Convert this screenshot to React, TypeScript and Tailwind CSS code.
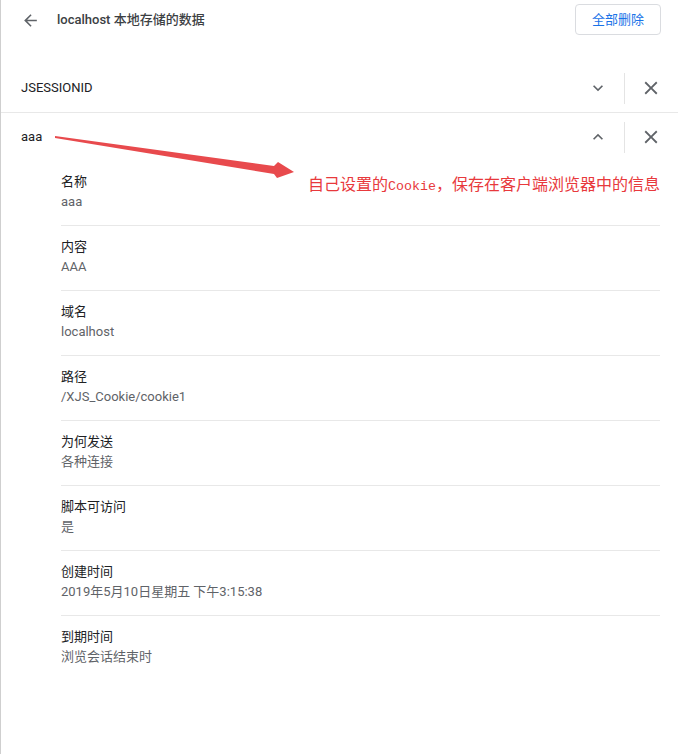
import type { ReactNode } from "react";

const details: { label: string; value: string }[] = [
  { label: "名称", value: "aaa" },
  { label: "内容", value: "AAA" },
  { label: "域名", value: "localhost" },
  { label: "路径", value: "/XJS_Cookie/cookie1" },
  { label: "为何发送", value: "各种连接" },
  { label: "脚本可访问", value: "是" },
  { label: "创建时间", value: "2019年5月10日星期五 下午3:15:38" },
  { label: "到期时间", value: "浏览会话结束时" },
];

function IconButton({ children }: { children: ReactNode }) {
  return (
    <button type="button" className="grid h-10 w-10 place-items-center text-[#5f6368]">
      {children}
    </button>
  );
}

function Chevron({ up }: { up?: boolean }) {
  return (
    <svg width="20" height="20" viewBox="0 0 24 24" fill="currentColor" className={up ? "rotate-180" : ""}>
      <path d="M16.59 8.59L12 13.17 7.41 8.59 6 10l6 6 6-6z" />
    </svg>
  );
}

function Close() {
  return (
    <svg width="22" height="22" viewBox="0 0 24 24" fill="currentColor">
      <path d="M19 6.41L17.59 5 12 10.59 6.41 5 5 6.41 10.59 12 5 17.59 6.41 19 12 13.41 17.59 19 19 17.59 13.41 12z" />
    </svg>
  );
}

function CookieRow({ name, open }: { name: string; open?: boolean }) {
  return (
    <div className="flex h-12 items-center pl-5">
      <span className="flex-1 text-[13px] text-[#202124]">{name}</span>
      <IconButton>
        <Chevron up={open} />
      </IconButton>
      <span className="mx-[6px] h-[31px] w-px bg-[#e4e4e4]" />
      <IconButton>
        <Close />
      </IconButton>
      <span className="w-[7px]" />
    </div>
  );
}

export default function App() {
  return (
    <div
      className="relative min-h-[754px] w-[678px] border-l border-[#cfcfcf] bg-white"
      style={{ fontFamily: 'Roboto, "Noto Sans CJK SC", sans-serif' }}
    >
      <header className="flex h-10 items-center pr-[17px]">
        <button type="button" className="ml-[19px] grid h-5 w-5 place-items-center text-[#5f6368]">
          <svg width="19" height="19" viewBox="0 0 24 24" fill="currentColor">
            <path d="M20 11H7.83l5.59-5.59L12 4l-8 8 8 8 1.41-1.41L7.83 13H20v-2z" />
          </svg>
        </button>
        <h1 className="ml-[17px] flex-1 text-[13px] font-medium text-[#3c4043]">
          localhost 本地存储的数据
        </h1>
        <button
          type="button"
          className="mt-[-1px] h-[31px] w-[86px] rounded-[4px] border border-[#dadce0] text-[13px] text-[#1a73e8]"
        >
          全部删除
        </button>
      </header>

      <div className="mt-6">
        <CookieRow name="JSESSIONID" />
        <div className="border-t border-[#e8e8e8]">
          <CookieRow name="aaa" open />
        </div>
        <div className="mr-[18px] ml-[60px]">
          {details.map((item, i) => (
            <div
              key={item.label}
              className={i === 0 ? "pt-[11px] pb-[13px]" : "border-t border-[#e8e8e8] pt-[11px] pb-[13px]"}
            >
              <div className="text-[13px] leading-5 text-[#202124]">{item.label}</div>
              <div className="text-[13px] leading-5 text-[#5f6368]">{item.value}</div>
            </div>
          ))}
        </div>
      </div>

      <svg className="pointer-events-none absolute top-0 left-0" width="678" height="200">
        <polygon
          points="54,136 273,166 277,162 293,172 276,178 273,174 54,138"
          fill="#e84a4d"
        />
      </svg>
      <div
        className="absolute top-[173px] left-[307px] text-[16px] leading-5 whitespace-nowrap text-[#e8393c]"
        style={{ fontFamily: '"Noto Sans CJK SC", sans-serif' }}
      >
        自己设置的<span className="font-['Liberation_Mono'] text-[13.3px]">Cookie</span>，保存在客户端浏览器中的信息
      </div>
    </div>
  );
}
